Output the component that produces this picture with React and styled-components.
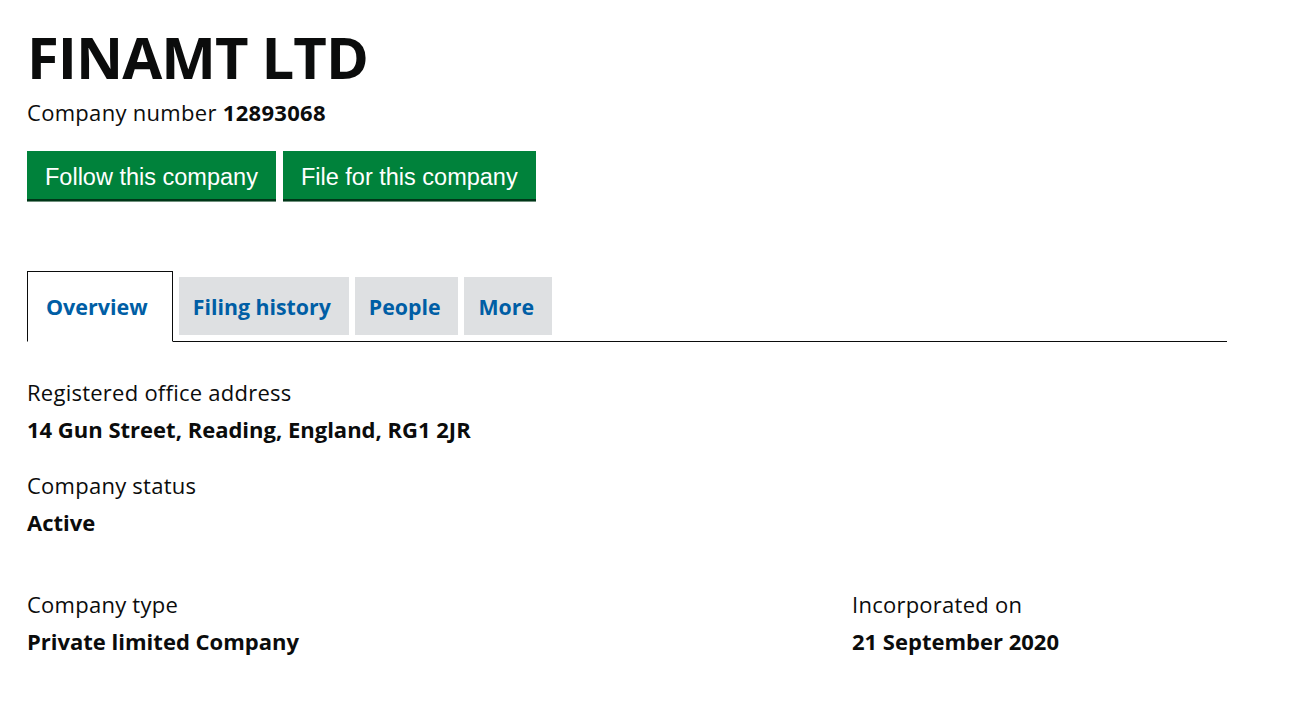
import React from 'react';
import styled, { createGlobalStyle } from 'styled-components';

const GlobalStyle = createGlobalStyle`
  body {
    margin: 0;
    background: #fff;
    color: #0b0c0c;
    font-family: "Open Sans", "Liberation Sans", sans-serif;
  }
`

const Page = styled.div`
  width: 1200px;
  padding: 23px 0 40px 27px;
`

const Heading = styled.h1`
  margin: 0;
  font-size: 58px;
  font-weight: 700;
  line-height: 68px;
  letter-spacing: -1px;
`

const CompanyNumber = styled.p`
  margin: 9px 0 0;
  font-size: 22px;
  line-height: 24px;
  letter-spacing: 0.3px;
  b { font-weight: 700; }
`

const Actions = styled.div`
  display: flex;
  gap: 7px;
  margin-top: 27px;
`

const GreenButton = styled.button`
  background: #00823b;
  color: #fff;
  border: none;
  border-bottom: 2px solid #003618;
  box-shadow: 0 1px 0 #6f8f7c;
  font-family: "Liberation Sans", Arial, sans-serif;
  font-size: 23.5px;
  height: 50px;
  padding: 4px 18px 0;
  cursor: pointer;
`

const TabBar = styled.div`
  display: flex;
  align-items: flex-end;
  gap: 6px;
  margin-top: 70px;
  border-bottom: 1px solid #0b0c0c;
`

const Tab = styled.a`
  display: flex;
  align-items: center;
  font-size: ${p => (p.active ? '21.5px' : '21.3px')};
  font-weight: 700;
  color: #005ea5;
  text-decoration: none;
  padding: ${p => (p.active ? '0 24px 0 18px' : '0 18px 0 14px')};
  height: ${p => (p.active ? '69px' : '58px')};
  background: ${p => (p.active ? '#fff' : '#dee0e2')};
  border: ${p => (p.active ? '1px solid #0b0c0c' : 'none')};
  border-bottom: ${p => (p.active ? '1px solid #fff' : 'none')};
  margin-bottom: ${p => (p.active ? '-1px' : '6px')};
`

const Details = styled.div`
  display: grid;
  grid-template-columns: 825px 1fr;
  margin-top: 38px;
`

const Field = styled.div`
  grid-column: ${p => p.col || 1};
  margin-bottom: ${p => p.gap || 20}px;
`

const Label = styled.div`
  font-size: 22px;
  line-height: 24px;
  letter-spacing: 0.25px;
`

const Value = styled.div`
  font-size: 22px;
  font-weight: 700;
  line-height: 24px;
  margin-top: 13px;
`

export default function App() {
  return (
    <Page>
      <GlobalStyle />
      <Heading>FINAMT LTD</Heading>
      <CompanyNumber>Company number <b>12893068</b></CompanyNumber>
      <Actions>
        <GreenButton>Follow this company</GreenButton>
        <GreenButton>File for this company</GreenButton>
      </Actions>
      <TabBar>
        <Tab active href="#">Overview</Tab>
        <Tab href="#">Filing history</Tab>
        <Tab href="#">People</Tab>
        <Tab href="#">More</Tab>
      </TabBar>
      <Details>
        <Field gap={32}>
          <Label>Registered office address</Label>
          <Value>14 Gun Street, Reading, England, RG1 2JR</Value>
        </Field>
        <Field gap={58}>
          <Label>Company status</Label>
          <Value>Active</Value>
        </Field>
        <Field>
          <Label>Company type</Label>
          <Value>Private limited Company</Value>
        </Field>
        <Field col={2}>
          <Label>Incorporated on</Label>
          <Value>21 September 2020</Value>
        </Field>
      </Details>
    </Page>
  );
}
